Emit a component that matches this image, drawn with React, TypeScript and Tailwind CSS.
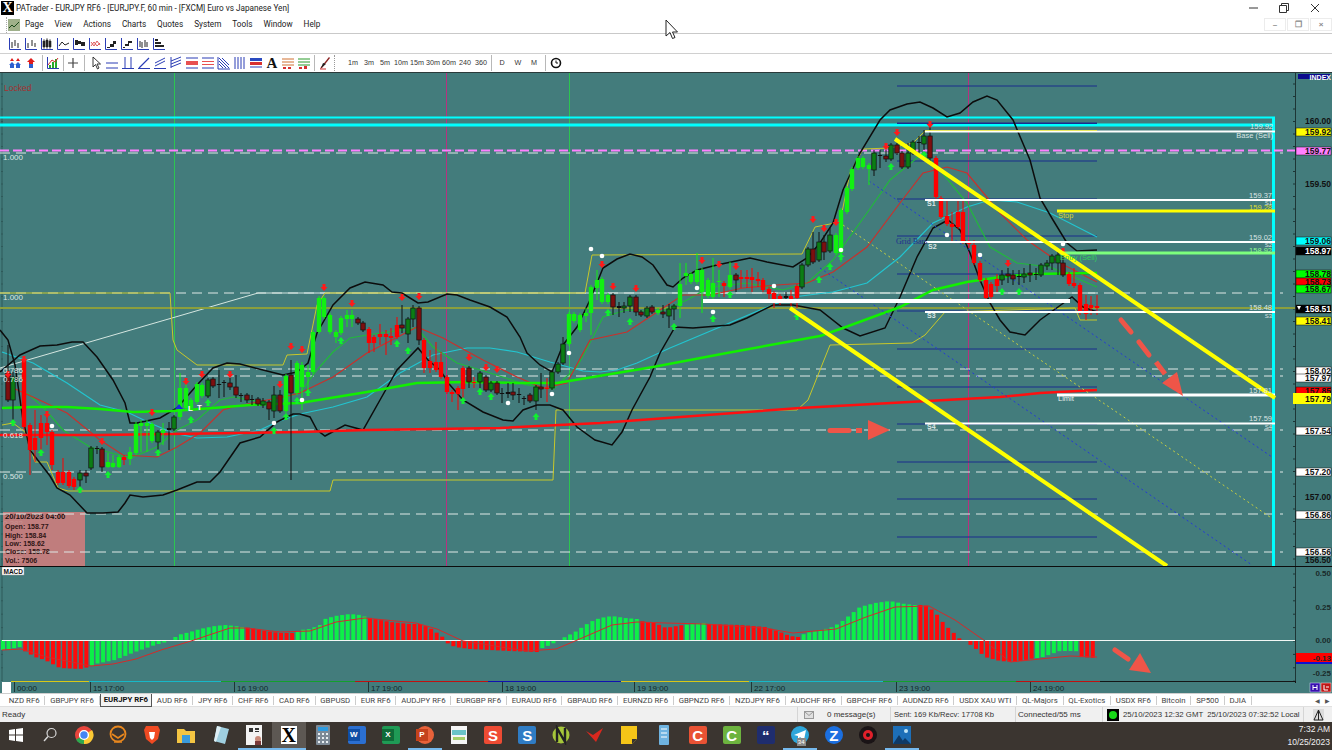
import type { ReactNode } from 'react'

// candles: x, bodyTop, bodyBottom, wickTop, wickBottom, kind
// L lime, D dark green, R red, M maroon, K doji
type Candle = [number, number, number, number, number, string]

const candles: Candle[] = [
  [8,373,400,345,402,'M'],[13,377,400,372,420,'D'],[24,360,427,358,430,'R'],[30,425,450,423,475,'R'],[35,438,450,410,462,'R'],
  [41,423,438,415,450,'R'],[47,423,432,412,445,'R'],[52,432,465,430,470,'R'],[58,472,483,470,485,'R'],[63,472,483,458,485,'R'],
  [69,472,486,470,488,'R'],[74,479,487,477,490,'R'],[80,473,480,470,490,'D'],[86,473,476,470,483,'M'],[91,448,468,446,470,'D'],
  [97,448,449,446,454,'K'],[102,449,467,447,472,'M'],[108,462,467,453,468,'L'],[113,463,467,455,468,'L'],[119,457,467,455,468,'L'],
  [124,457,460,455,465,'R'],[130,452,459,447,465,'L'],[136,424,453,422,455,'L'],[141,423,426,420,452,'L'],[147,423,426,420,452,'L'],
  [152,424,441,422,443,'L'],[158,432,442,430,453,'D'],[163,430,433,423,445,'L'],[169,428,430,422,450,'K'],[174,417,429,415,431,'D'],
  [180,388,417,373,420,'L'],[186,388,408,384,410,'L'],[191,400,408,398,410,'L'],[197,384,402,382,404,'L'],[202,385,396,383,398,'L'],
  [208,380,396,378,398,'D'],[213,379,386,377,388,'M'],[219,384,385,370,398,'K'],[224,382,383,380,397,'K'],[230,383,387,378,390,'M'],
  [236,387,395,375,398,'M'],[241,395,396,393,402,'K'],[247,395,400,393,403,'M'],[252,399,400,395,405,'K'],[258,399,404,397,406,'M'],
  [263,401,405,398,408,'D'],[269,402,409,400,420,'M'],[274,395,411,386,418,'D'],[280,395,411,390,413,'M'],[286,376,411,374,413,'L'],
  [291,375,393,360,480,'M'],[297,363,393,361,395,'L'],[302,365,387,362,410,'L'],[308,372,377,365,395,'L'],[313,332,372,330,374,'L'],
  [319,298,332,296,334,'L'],[324,298,317,296,319,'L'],[330,315,332,313,334,'L'],[336,332,337,330,343,'L'],[341,318,333,316,335,'L'],
  [347,315,319,310,327,'L'],[352,315,319,310,327,'L'],[358,319,323,317,325,'M'],[363,323,330,321,332,'M'],[369,329,343,327,353,'R'],
  [374,337,343,335,352,'R'],[380,334,337,324,345,'R'],[386,334,337,330,355,'R'],[391,336,338,328,345,'R'],[397,325,337,317,339,'R'],
  [402,325,328,305,333,'M'],[408,319,334,317,343,'D'],[413,308,319,305,327,'D'],[419,308,340,306,345,'M'],[424,340,368,338,373,'R'],
  [430,361,368,350,373,'R'],[436,362,370,342,372,'R'],[441,362,377,352,379,'R'],[447,377,392,375,394,'R'],[452,392,394,390,402,'R'],
  [458,388,394,386,410,'R'],[463,368,389,366,403,'R'],[469,368,382,366,388,'M'],[474,382,383,377,388,'R'],[480,373,382,371,388,'D'],
  [486,377,390,375,392,'M'],[491,383,390,381,392,'D'],[497,383,393,381,395,'M'],[502,393,394,388,403,'K'],[508,392,394,383,398,'K'],
  [513,392,395,383,400,'M'],[519,394,395,388,403,'K'],[524,398,399,396,405,'K'],[530,395,401,393,403,'M'],[536,387,401,385,410,'D'],
  [541,387,389,373,398,'M'],[547,388,389,378,402,'R'],[552,372,388,370,390,'D'],[558,364,372,362,374,'D'],[563,344,363,337,365,'D'],
  [569,314,344,312,346,'L'],[574,314,321,312,323,'L'],[580,315,330,313,332,'L'],[586,313,316,308,322,'L'],[591,287,313,285,335,'L'],
  [597,280,288,270,300,'L'],[602,279,302,277,304,'L'],[608,295,302,293,304,'L'],[613,295,307,293,315,'M'],[619,306,308,302,317,'K'],
  [624,306,308,302,313,'D'],[630,297,306,295,312,'D'],[636,297,312,295,316,'M'],[641,312,315,310,317,'M'],[647,308,316,306,318,'D'],
  [652,307,312,305,314,'M'],[658,310,313,308,315,'L'],[663,312,314,305,318,'M'],[669,309,316,304,328,'D'],[674,306,309,304,320,'D'],
  [680,284,306,263,318,'L'],[686,273,276,263,285,'L'],[691,274,282,272,284,'L'],[697,270,282,253,284,'L'],[702,270,292,268,313,'L'],
  [708,280,296,278,298,'L'],[713,283,297,258,299,'L'],[719,281,282,270,297,'L'],[724,283,286,281,297,'R'],[730,275,287,262,289,'L'],
  [736,275,280,273,292,'M'],[741,277,279,270,288,'R'],[747,277,279,270,288,'R'],[752,277,280,268,292,'R'],[758,279,281,272,287,'R'],
  [763,280,290,278,292,'R'],[769,289,294,287,299,'R'],[774,293,303,291,308,'R'],[780,296,302,294,305,'R'],[786,296,298,292,302,'K'],
  [791,296,299,290,306,'R'],[797,286,298,284,308,'R'],[802,265,287,263,289,'D'],[808,249,265,247,267,'D'],[813,249,262,232,264,'M'],
  [819,242,260,232,262,'D'],[824,242,252,235,260,'M'],[830,235,251,228,253,'D'],[836,235,253,233,255,'L'],[841,210,253,208,262,'L'],
  [847,188,212,186,214,'L'],[852,169,189,167,191,'L'],[858,158,168,156,170,'L'],[863,158,167,156,169,'L'],[869,165,169,163,185,'L'],
  [874,153,170,150,176,'D'],[880,155,156,150,168,'K'],[886,156,159,150,162,'M'],[891,145,159,143,161,'D'],[897,145,153,143,155,'M'],
  [902,153,167,151,169,'M'],[908,153,167,143,169,'D'],[913,142,153,140,155,'D'],[919,142,143,136,155,'K'],[924,136,144,130,150,'D'],
  [930,136,158,125,165,'M'],[936,158,197,156,199,'R'],[941,198,217,196,219,'R'],[947,216,224,200,226,'R'],[952,224,227,212,243,'R'],
  [958,212,227,201,229,'R'],[963,212,242,200,244,'R'],[969,242,244,240,248,'R'],[974,245,263,240,265,'R'],[980,263,280,261,282,'R'],
  [986,280,298,278,300,'R'],[991,284,297,282,299,'R'],[997,279,286,274,292,'R'],[1002,275,280,270,285,'D'],[1008,274,276,268,283,'M'],
  [1013,275,279,270,285,'M'],[1019,276,277,270,285,'K'],[1024,274,277,268,283,'D'],[1030,273,275,264,282,'M'],[1036,274,275,268,280,'K'],
  [1041,265,275,263,277,'D'],[1047,263,266,260,270,'D'],[1052,256,263,254,270,'D'],[1058,255,263,252,275,'D'],[1063,263,275,250,277,'M'],
  [1069,274,284,272,286,'R'],[1074,283,286,268,288,'R'],[1080,285,313,283,315,'R'],[1086,304,314,295,320,'R'],[1091,305,308,296,315,'R'],
  [1097,306,308,295,315,'R'],
]

const upperBand = '0,372 20,355 40,346 57,345 72,342 83,342 97,357 113,380 125,403 130,423 137,423 160,418 177,408 197,385 213,368 227,363 240,364 263,370 283,375 297,372 308,363 317,333 333,305 350,288 365,282 383,285 392,292 402,293 418,303 428,302 447,294 457,295 470,300 490,307 507,317 520,337 527,353 540,365 552,372 563,345 577,327 590,300 603,268 617,259 630,254 642,257 653,265 667,285 673,287 683,278 697,270 717,265 750,258 767,262 793,267 807,258 820,243 833,223 843,190 860,153 880,120 890,110 907,104 920,102 933,108 947,117 960,113 973,102 987,96 997,100 1013,120 1030,160 1040,198 1053,220 1067,243 1077,251 1097,250'
const lowerBand = '0,330 8,340 15,365 23,420 30,450 50,476 57,488 70,495 87,513 103,513 118,512 125,503 130,495 143,497 163,495 177,490 197,482 210,482 220,472 240,443 260,437 277,422 293,414 300,414 310,417 317,430 325,436 345,425 363,430 380,400 397,370 418,348 428,360 440,370 450,385 463,400 483,412 503,420 513,421 523,410 537,405 550,405 563,410 577,427 595,440 612,445 622,432 632,410 650,377 660,353 675,327 693,328 730,325 747,318 773,305 793,305 820,310 843,328 860,336 885,328 900,297 917,257 933,228 948,220 960,230 970,253 980,280 990,303 1000,320 1010,332 1025,335 1040,320 1058,307 1072,297 1083,307 1097,312'
const cyanLine = '2,352 33,363 67,383 100,405 127,412 150,423 173,433 197,438 227,437 260,430 277,422 300,414 333,407 367,397 400,373 433,355 467,348 490,348 517,352 550,362 583,371 600,372 617,370 637,363 670,348 720,327 760,310 793,297 833,292 867,283 900,257 933,223 967,207 990,200 1017,202 1050,213 1097,237'
const redLine = '13,388 33,397 67,413 100,440 123,455 157,457 177,447 200,433 223,410 233,407 267,400 283,397 300,393 333,377 367,353 417,327 443,338 483,360 517,377 543,388 567,383 590,340 627,332 660,310 683,295 710,295 743,288 777,285 807,283 833,272 867,247 900,203 923,173 947,167 967,173 1000,213 1027,240 1060,263 1097,282'
const greenLine = '27,393 43,407 63,430 90,447 130,458 157,447 177,430 197,420 220,400 233,397 267,403 300,393 317,370 333,352 350,338 367,335 417,328 433,347 457,363 487,372 527,385 553,389 577,367 593,337 603,317 627,310 660,312 687,300 710,287 747,283 783,290 807,283 833,260 867,213 890,180 923,153 940,170 967,203 990,247 1017,263 1050,267 1097,287'
const thickGreen = '2,408 33,407 67,407 100,409 133,412 173,411 213,408 250,405 300,403 367,392 417,383 467,382 517,383 557,383 653,367 727,353 820,336 843,328 900,307 933,290 967,282 1000,277 1033,274 1097,273'
const thickRed = '0,435 100,435 300,432 367,430 500,428 600,423 800,408 1000,397 1040,393 1097,390'
const yellowUpper = '0,293 170,293 173,340 177,350 197,365 283,365 287,355 307,354 317,305 325,293 585,293 592,255 802,254 815,227 840,222 850,173 863,149 890,148 913,143 925,131'
const yellowLower = '2,425 13,423 25,432 35,462 47,462 58,488 68,491 330,491 333,480 553,480 556,410 797,410 808,400 830,345 912,343 925,335 945,312 1075,308 1080,320 1097,320'

const redMarks = [[24,360],[8,375],[47,415],[102,442],[152,413],[186,382],[202,375],[230,375],[280,385],[291,347],[302,350],[324,288],[352,304],[402,298],[419,297],[469,358],[486,368],[497,370],[602,265],[613,287],[636,289],[702,261],[719,265],[736,267],[813,220],[824,229],[836,223],[886,147],[897,133],[930,125],[1008,264],[1063,252]]
const greenMarks = [[13,423],[41,453],[80,490],[108,475],[158,453],[191,420],[208,403],[274,431],[286,417],[297,401],[308,393],[341,341],[397,344],[408,351],[463,401],[480,392],[491,397],[536,417],[608,313],[630,322],[674,327],[713,319],[730,295],[797,317],[819,280],[830,267],[841,257],[891,167],[924,155],[1002,292],[1019,292]]
const whiteDots = [[52,426],[274,423],[302,400],[508,403],[552,394],[569,353],[591,249],[602,256],[697,288],[713,312],[774,286],[841,250],[947,235],[980,255],[1063,244]]

const gridLines = [86,123,161,199,236,274,311,349,387,424,462,499,537]
const dashed = [153,293,369,376,430,472,514,552]

const priceTags: [number, string, string, string][] = [
  [132,'159.92','#ffff00','#111'],[151,'159.77','#ff80ff','#111'],[241,'159.06','#00ffff','#111'],[251,'158.97','#000','#fff'],
  [274,'158.78','#00ff00','#111'],[282,'158.73','#ff0000','#111'],[289,'158.67','#00ff00','#111'],[309,'158.51','#000','#fff'],
  [321,'158.41','#ffff00','#111'],[371,'158.02','#fff','#111'],[378,'157.97','#fff','#111'],[391,'157.85','#ff0000','#111'],
  [431,'157.54','#fff','#111'],[472,'157.20','#fff','#111'],[515,'156.86','#fff','#111'],[552,'156.56','#fff','#111'],
]

// macd histogram anchors, value in px above the zero line
const macdAnchors = [[2,-10],[10,-9],[20,-7],[23,-10],[35,-17],[45,-20],[60,-28],[80,-29],[89,-27],[95,-24],[115,-20],[135,-12],[155,-5],[170,-1],[178,5],[190,8],[200,11],[215,14],[225,15],[235,14],[242,13],[250,12],[265,9],[280,7],[293,7],[300,10],[310,11],[320,15],[325,21],[335,24],[350,26],[360,25],[366,23],[375,21],[390,18],[410,16],[420,16],[430,12],[440,5],[444,2],[447,-3],[455,-7],[470,-9],[490,-10],[510,-11],[537,-12],[540,-9],[550,-5],[558,-1],[565,3],[575,8],[590,18],[600,22],[612,24],[625,22],[637,21],[640,19],[655,17],[666,12],[683,15],[704,17],[706,16],[740,15],[765,13],[780,8],[790,4],[798,3],[802,5],[806,7],[830,12],[840,17],[850,25],[860,33],[875,37],[890,39],[905,36],[914,35],[925,35],[935,28],[945,15],[955,6],[960,1],[965,-1],[975,-8],[985,-17],[1000,-21],[1015,-22],[1035,-18],[1040,-18],[1060,-11],[1076,-11],[1079,-17],[1097,-18]]
const macdRed = [[22,91],[244,294],[366,538],[639,682],[705,803],[916,1037],[1077,1100]]
const macdSignal = '2,80 21,79 47,87 91,96 113,94 136,89 161,80 191,71 230,58 246,58 280,62 310,61 336,52 365,48 416,53 437,59 463,71 527,81 556,79 582,68 612,55 637,52 666,53 704,54 764,58 793,63 836,59 866,47 895,37 929,36 955,50 985,71 1010,92 1040,89 1070,86 1097,87'

function macdValue(x: number) {
  for (let i = 1; i < macdAnchors.length; i++) {
    const [x0, v0] = macdAnchors[i - 1]
    const [x1, v1] = macdAnchors[i]
    if (x <= x1) return v0 + ((v1 - v0) * (x - x0)) / (x1 - x0)
  }
  return 0
}

const macdBars = Array.from({ length: 198 }, (_, i) => {
  const x = 3 + i * 5.56
  return { x, v: macdValue(x), red: macdRed.some(([a, b]) => x >= a && x <= b) }
})

function Candles() {
  return (
    <g>
      {candles.map(([x, top, bot, wt, wb, kind]) => {
        const wick = kind === 'L' ? '#11f011' : kind === 'R' ? '#ff0000' : '#101010'
        const fill = kind === 'L' ? '#11f011' : kind === 'R' ? '#ff0000' : kind === 'D' ? '#0b7d14' : kind === 'M' ? '#7d0f0f' : '#101010'
        const outline = kind === 'D' || kind === 'M' ? '#101010' : 'none'
        return (
          <g key={x}>
            <line x1={x} x2={x} y1={wt} y2={wb} stroke={wick} strokeWidth="1" />
            <rect x={x - 2.2} y={top} width="4.4" height={Math.max(bot - top, 1)} fill={fill} stroke={outline} strokeWidth="0.7" />
          </g>
        )
      })}
    </g>
  )
}

function PriceChart() {
  return (
    <svg width="1332" height="495" viewBox="0 72 1332 495" className="block font-['Liberation_Sans',sans-serif]">
      <rect x="0" y="72" width="1332" height="495" fill="#437c7c" />
      <line x1="0" x2="1332" y1="72.5" y2="72.5" stroke="#2a3a3a" />
      <line x1="2" x2="2" y1="73" y2="566" stroke="#2f5a5a" />
      <line x1="1295.5" x2="1295.5" y1="73" y2="566" stroke="#1d3535" />
      {Array.from({ length: 40 }, (_, i) => (
        <g key={i}>
          <line x1="1293" x2="1296" y1={84 + i * 12.5} y2={84 + i * 12.5} stroke="#1d3535" />
          <line x1="1" x2="3" y1={84 + i * 12.5} y2={84 + i * 12.5} stroke="#2f5a5a" />
        </g>
      ))}

      {/* tooltip sits under the fib lines */}
      <rect x="3" y="512" width="82" height="54" fill="#c07d7d" />
      <g fontSize="8" fill="#c89090">
        <text x="3" y="526">0.382</text>
        <text x="3" y="561">0.618</text>
      </g>
      <text x="5" y="519" fontSize="7.7" fontWeight="700" fill="#201010">20/10/2023 04:00</text>
      <g fontSize="7" fontWeight="700" fill="#301515">
        <text x="5" y="529">Open: 158.77</text>
        <text x="5" y="538">High: 158.84</text>
        <text x="5" y="546">Low: 158.62</text>
        <text x="5" y="554">Close: 158.78</text>
        <text x="5" y="563">Vol.: 7506</text>
      </g>

      <line x1="174.5" x2="174.5" y1="73" y2="566" stroke="#2cc650" />
      <line x1="569.5" x2="569.5" y1="73" y2="566" stroke="#2cc650" />
      <line x1="446.5" x2="446.5" y1="73" y2="566" stroke="#b83080" />
      <line x1="968.5" x2="968.5" y1="73" y2="566" stroke="#b83080" />

      {gridLines.map((y) => (
        <line key={y} x1="897" x2="1097" y1={y} y2={y} stroke="#1a2c8c" strokeWidth="1" />
      ))}
      {dashed.map((y) => (
        <line key={y} x1="0" x2="1283" y1={y} y2={y} stroke="#dfe8e6" strokeWidth="1" strokeDasharray="10 6" />
      ))}

      <polyline points="0,368 258,293 1095,293" fill="none" stroke="#d5e6e0" strokeWidth="1" />
      <line x1="0" x2="1295" y1="308" y2="308" stroke="#8b9f3d" strokeWidth="2" />

      <line x1="0" x2="1275" y1="117.5" y2="117.5" stroke="#00ffff" strokeWidth="2" />
      <line x1="0" x2="1275" y1="125" y2="125" stroke="#00ffff" strokeWidth="3" />
      <line x1="1273.5" x2="1273.5" y1="117" y2="566" stroke="#00ffff" strokeWidth="3" />
      <line x1="0" x2="1295" y1="150.5" y2="150.5" stroke="#ff80ff" strokeWidth="2" strokeDasharray="9 4" />
      <line x1="897" x2="1097" y1="123.5" y2="123.5" stroke="#1a2c8c" />

      <polyline points={yellowUpper} fill="none" stroke="#c8c82a" strokeWidth="1" />
      <polyline points={yellowLower} fill="none" stroke="#c8c82a" strokeWidth="1" />
      <polyline points={cyanLine} fill="none" stroke="#22c5d0" strokeWidth="1.2" />
      <polyline points={greenLine} fill="none" stroke="#22b83c" strokeWidth="1.2" />
      <polyline points={redLine} fill="none" stroke="#c9302c" strokeWidth="1.2" />
      <polyline points={upperBand} fill="none" stroke="#0c0c0c" strokeWidth="1.5" />
      <polyline points={lowerBand} fill="none" stroke="#0c0c0c" strokeWidth="1.5" />
      <polyline points={thickGreen} fill="none" stroke="#12f000" strokeWidth="2.5" />
      <polyline points={thickRed} fill="none" stroke="#ff1010" strokeWidth="2.5" />

      <line x1="869" y1="181" x2="1272" y2="457" stroke="#2438d8" strokeDasharray="2 3" />
      <line x1="820" y1="268" x2="1252" y2="565" stroke="#2438d8" strokeDasharray="2 3" />
      <line x1="843" y1="225" x2="1270" y2="517" stroke="#c8d040" strokeDasharray="2 3" />

      <Candles />

      {redMarks.map(([x, y]) => (
        <path key={`r${x}`} d={`M${x - 1.5} ${y - 4}h3v3h2l-3.5 4l-3.5 -4h2z`} fill="#ff1a1a" />
      ))}
      {greenMarks.map(([x, y]) => (
        <path key={`g${x}`} d={`M${x} ${y - 4}l3.5 4h-2v3h-3v-3h-2z`} fill="#10f030" />
      ))}
      {whiteDots.map(([x, y]) => (
        <circle key={`w${x}`} cx={x} cy={y} r="2.3" fill="#ffffff" />
      ))}

      {/* levels */}
      <line x1="925" x2="1275" y1="131.5" y2="131.5" stroke="#ffffff" strokeWidth="2" />
      <line x1="925" x2="1097" y1="130.5" y2="130.5" stroke="#e8e860" strokeWidth="1" />
      <line x1="925" x2="1275" y1="200" y2="200" stroke="#ffffff" strokeWidth="2" />
      <line x1="1057" x2="1275" y1="211" y2="211" stroke="#ffff00" strokeWidth="3" />
      <line x1="925" x2="1275" y1="242" y2="242" stroke="#ffffff" strokeWidth="2" />
      <line x1="1060" x2="1275" y1="253" y2="253" stroke="#7dff7d" strokeWidth="3" />
      <line x1="703" x2="1070" y1="301" y2="301" stroke="#ffffff" strokeWidth="4" />
      <line x1="925" x2="1275" y1="312" y2="312" stroke="#ffffff" strokeWidth="2" />
      <line x1="1057" x2="1275" y1="395" y2="395" stroke="#ffffff" strokeWidth="3" />
      <line x1="925" x2="1275" y1="423.5" y2="423.5" stroke="#ffffff" strokeWidth="2" />

      <line x1="895" y1="139" x2="1275" y2="398" stroke="#ffff00" strokeWidth="4" />
      <line x1="790" y1="308" x2="1167" y2="566" stroke="#ffff00" strokeWidth="4" />

      {/* hand drawn arrows */}
      <g fill="#ef5548" stroke="#ef5548" strokeWidth="5" strokeLinecap="round">
        <line x1="1121" y1="320" x2="1131" y2="332" />
        <line x1="1139" y1="342" x2="1149" y2="355" />
        <line x1="1156" y1="362" x2="1165" y2="374" strokeLinecap="butt" />
        <line x1="830" y1="430.5" x2="849" y2="430.5" />
        <line x1="856" y1="430.5" x2="862" y2="430.5" strokeLinecap="butt" />
      </g>
      <path d="M1177 372L1162 383L1183 396Z" fill="#ef5548" />
      <path d="M868 420L890 430L868 440Z" fill="#ef5548" />

      {/* texts on the chart */}
      <text x="4" y="91" fontSize="8.5" fill="#a53030">Locked</text>
      <g fontSize="8" fill="#dbe6e4">
        <text x="3" y="160">1.000</text>
        <text x="3" y="300">1.000</text>
        <text x="3" y="373">0.786</text>
        <text x="3" y="382">0.786</text>
        <text x="3" y="438">0.618</text>
        <text x="3" y="479">0.500</text>
      </g>
      <g fontSize="8" fontWeight="700" fill="#ffffff">
        <text x="188" y="411">L</text>
        <text x="197" y="410">T</text>
      </g>
      <path d="M175 409l4 -5l4 5z" fill="#1a2cd8" />
      <g fontSize="7.5" fill="#dbe6e4" textAnchor="end">
        <text x="1273" y="129">159.92</text>
        <text x="1273" y="138">Base (Sell)</text>
        <text x="1272" y="198">159.37</text>
        <text x="1272" y="240">159.02</text>
        <text x="1272" y="310">158.48</text>
        <text x="1272" y="393">157.81</text>
        <text x="1272" y="421">157.59</text>
      </g>
      <g fontSize="6" fill="#dbe6e4" textAnchor="end">
        <text x="1272" y="205">S1</text>
        <text x="1272" y="247">S2</text>
        <text x="1272" y="318">S3</text>
        <text x="1272" y="429">S4</text>
      </g>
      <text x="1272" y="209.5" fontSize="7.5" fill="#dcdc30" textAnchor="end">159.28</text>
      <text x="1272" y="252.5" fontSize="7.5" fill="#90ff90" textAnchor="end">158.92</text>
      <text x="1058" y="218" fontSize="7.5" fill="#d8d830">Stop</text>
      <text x="1058" y="401" fontSize="7.5" fill="#e8efee">Limit</text>
      <text x="1060" y="260" fontSize="7.5" fill="#33d45a">Entry (Sell)</text>
      <text x="896" y="244" fontSize="8" fill="#1c2f8f" fontFamily="Liberation Serif, serif">Grid Bars</text>
      <g fontSize="7" fontWeight="700" fill="#dbe6e4">
        <text x="927" y="206">S1</text>
        <text x="928" y="249">S2</text>
        <text x="927" y="318">S3</text>
        <text x="927" y="429">S4</text>
      </g>

      {/* price axis */}
      <rect x="1298" y="74" width="32" height="5" fill="#0b0b8c" />
      <text x="1331" y="79.5" fontSize="7" fontWeight="700" fill="#ffffff" textAnchor="end">INDEX</text>
      <g fontSize="8.5" fontWeight="700" fill="#111" textAnchor="end">
        <text x="1331" y="124">160.00</text>
        <text x="1331" y="187">159.50</text>
        <text x="1331" y="500">157.00</text>
        <text x="1331" y="563">156.50</text>
      </g>
      {priceTags.map(([y, label, bg, fg]) => (
        <g key={label}>
          <rect x="1296" y={y - 4} width="35" height="8" fill={bg} stroke="#111" strokeWidth="0.5" />
          <text x="1331" y={y + 3} fontSize="8.5" fontWeight="700" fill={fg} textAnchor="end">{label}</text>
        </g>
      ))}
      <path d="M1297 306h4l-2 4z" fill="#ffffff" />
      <rect x="1293" y="393" width="38" height="11" fill="#ffff00" />
      <text x="1331" y="402" fontSize="8.5" fontWeight="700" fill="#111" textAnchor="end">157.79</text>

      <line x1="0" x2="1332" y1="566.5" y2="566.5" stroke="#0c0c0c" />
    </svg>
  )
}

function MacdPanel() {
  return (
    <svg width="1332" height="114" viewBox="0 567 1332 114" className="block font-['Liberation_Sans',sans-serif]">
      <rect x="0" y="567" width="1332" height="114" fill="#437c7c" />
      <line x1="2" x2="2" y1="567" y2="681" stroke="#2f5a5a" />
      <line x1="1295.5" x2="1295.5" y1="567" y2="681" stroke="#1d3535" />
      {Array.from({ length: 9 }, (_, i) => (
        <g key={i}>
          <line x1="1293" x2="1296" y1={574 + i * 13.4} y2={574 + i * 13.4} stroke="#1d3535" />
          <line x1="1" x2="3" y1={574 + i * 13.4} y2={574 + i * 13.4} stroke="#2f5a5a" />
        </g>
      ))}
      {macdBars.map((bar) => (
        <rect
          key={bar.x}
          x={bar.x - 2}
          y={bar.v > 0 ? 640 - bar.v : 640}
          width="4"
          height={Math.abs(bar.v)}
          fill={bar.red ? '#ff0a0a' : '#0cf048'}
        />
      ))}
      <line x1="2" x2="1295" y1="640.5" y2="640.5" stroke="#f2f7f5" strokeWidth="1" />
      <g transform="translate(0 570)">
        <polyline points={macdSignal} fill="none" stroke="#d42a2a" strokeWidth="1" />
      </g>
      <rect x="2" y="567" width="22" height="8" fill="#ffffff" stroke="#9a9a9a" strokeWidth="0.5" />
      <text x="3.5" y="573.5" fontSize="6.5" fontWeight="700" fill="#111">MACD</text>

      <g fill="#ef5548" stroke="#ef5548" strokeWidth="5" strokeLinecap="round">
        <line x1="1115" y1="650" x2="1128" y2="659" />
      </g>
      <path d="M1140 653L1129 670L1151 673Z" fill="#ef5548" />

      <g fontSize="8" fontWeight="700" fill="#1a2a2a" textAnchor="end">
        <text x="1331" y="576">0.50</text>
        <text x="1331" y="610">0.25</text>
        <text x="1331" y="643">0.00</text>
        <text x="1331" y="676">-0.25</text>
      </g>
      <rect x="1296" y="653" width="36" height="9" fill="#ff0000" />
      <rect x="1296" y="662" width="36" height="2" fill="#1010d0" />
      <text x="1331" y="660.5" fontSize="8" fontWeight="700" fill="#222" textAnchor="end">-0.13</text>
    </svg>
  )
}

const timeSegments: [number, number, string][] = [
  [11,89,'#d8c818'],[89,221,'#17b8c8'],[221,355,'#12a02c'],[355,488,'#c01010'],[488,621,'#1010b0'],
  [621,749,'#d8c818'],[749,883,'#17b8c8'],[883,1016,'#12a02c'],[1016,1100,'#c01010'],
]
const timeLabels: [number, string][] = [
  [15,'00:00'],[91,'15 17:00'],[235,'16 19:00'],[369,'17 19:00'],[503,'18 19:00'],[635,'19 19:00'],[752,'22 17:00'],[897,'23 19:00'],[1031,'24 19:00'],
]

function TimeAxis() {
  return (
    <svg width="1332" height="12" viewBox="0 681 1332 12" className="block font-['Liberation_Sans',sans-serif]">
      <rect x="0" y="681" width="1332" height="12" fill="#437c7c" />
      <line x1="11" x2="1295" y1="681" y2="681" stroke="#151515" strokeWidth="2" />
      <line x1="1295.5" x2="1295.5" y1="681" y2="683" stroke="#151515" />
      {timeSegments.map(([a, b, c]) => (
        <line key={a} x1={a} x2={b} y1="681" y2="681" stroke={c} strokeWidth="2" />
      ))}
      <rect x="2" y="682" width="9" height="11" fill="#ffffff" />
      {timeLabels.map(([x, label]) => (
        <g key={x}>
          <line x1={x - 0.5} x2={x - 0.5} y1="682" y2="692" stroke="#1f3535" />
          <text x={x + 2} y="691" fontSize="8" fill="#12282a">{label}</text>
        </g>
      ))}
      <rect x="1310" y="683" width="10" height="9" fill="#3a10b0" stroke="#dcdcff" strokeWidth="0.5" />
      <path d="M1313 685v5M1317 685v5M1313 687.5h4" stroke="#ffffff" fill="none" />
      <rect x="1321" y="683" width="10" height="9" fill="#c01818" stroke="#ffdcdc" strokeWidth="0.5" />
      <path d="M1324 685v5h4M1326 687h3" stroke="#ffffff" fill="none" />
    </svg>
  )
}

function Ico({ children }: { children: ReactNode }) {
  return (
    <div className="flex h-4 w-4 shrink-0 items-center justify-center">
      <svg width="14" height="14" viewBox="0 0 14 14">{children}</svg>
    </div>
  )
}

function Sep({ w = 'w-[6px]' }: { w?: string }) {
  return (
    <div className={`flex h-4 shrink-0 justify-center ${w}`}>
      <div className="h-full w-px bg-[#b8b8b8]" />
    </div>
  )
}

const BLUE = '#2a3db5'
const Axes = () => <path d="M1.5 1v11.5H13" fill="none" stroke={BLUE} strokeWidth="1" />

function Sticks({ xs }: { xs: [number, number, number][] }) {
  return (
    <>
      {xs.map(([x, a, b]) => (
        <line key={x} x1={x} x2={x} y1={a} y2={b} stroke="#222" strokeWidth="1" />
      ))}
    </>
  )
}

const chartIcons = [
  <Sticks key="1" xs={[[4,5,11],[7,3,9],[10,6,11]]} />,
  <Sticks key="2" xs={[[4,6,11],[8,3,9],[11,6,10]]} />,
  <path key="3" d="M3 4h2v6H3zM6 3h2v7H6zM9 4h2v6H9zM4 2v10M7 1v11M10 2v10" fill="#222" stroke="#222" strokeWidth="0.6" />,
  <path key="4" d="M3 9l3 -4l3 3l4 -2" fill="none" stroke="#222" />,
  <path key="5" d="M3 3h3v5H3zM6 4h3v3H6zM9 5h4v4H9z" fill="#222" />,
  <path key="6" d="M3 5l3 4l3 -5l3 4M3 9l3 -4l3 4l3 -3" fill="none" stroke="#e05a5a" />,
  <path key="7" d="M3 10h3V7h3V4h3v3h-2v3H6v1H3z" fill="#222" />,
  <path key="8" d="M3 10h2V7h3V4h4v2h-3v3H5v2H3z" fill="#222" />,
  <Sticks key="9" xs={[[4,4,10],[6,5,11],[9,3,10],[11,5,10]]} />,
  <path key="10" d="M3 2h3v2H3zM3 5h6v2H3zM3 8h9v2H3z" fill="#222" />,
]

const drawIcons = [
  <path key="a" d="M1 7h12M1 12h12" stroke={BLUE} fill="none" />,
  <path key="b" d="M4 1v11M10 1v11M1 12.5h12" stroke={BLUE} fill="none" />,
  <path key="c" d="M2 12L12 2M1 12.5h12" stroke={BLUE} strokeWidth="1.2" fill="none" />,
  <path key="d" d="M2 10L12 5M2 7L12 2M1 12.5h12" stroke={BLUE} fill="none" />,
  <path key="e" d="M2 11L12 7M2 8L12 4M2 5L12 1M2 1v11" stroke={BLUE} fill="none" />,
  <><path key="f" d="M1 2h12M1 12h12" stroke={BLUE} fill="none" /><path d="M1 5h12v4H1z" fill="#e85050" /></>,
  <><path key="g" d="M1 2h12M1 12h12" stroke={BLUE} fill="none" /><path d="M1 5h12v1H1zM1 8h12v1H1z" fill="#e85050" /></>,
  <path key="h" d="M2 2l10 10M2 5l7 7M5 2l7 7M2 8l4 4M1 1v12h12" stroke={BLUE} fill="none" />,
  <path key="i" d="M2 1v12M5 1v12M8 1v12M11 1v12" stroke={BLUE} fill="none" />,
]

function TitleBar() {
  return (
    <div className="flex h-4 items-center">
      <div className="ml-px flex h-[14px] w-[13px] items-center justify-center bg-black font-['Liberation_Serif',serif] text-[14px] font-bold leading-none text-white">X</div>
      <span className="ml-[2px] font-['Roboto',sans-serif] text-[8.2px] text-[#222]">PATrader - EURJPY RF6 - [EURJPY.F, 60 min - [FXCM] Euro vs Japanese Yen]</span>
      <div className="ml-auto flex items-center">
        <svg width="10" height="10" viewBox="0 0 10 10" className="mr-5"><path d="M0 5h9" stroke="#333" /></svg>
        <svg width="10" height="10" viewBox="0 0 10 10" className="mr-[21px]"><path d="M0.5 2.5h7v7h-7zM2.5 2V0.5h7v7H8" fill="none" stroke="#333" /></svg>
        <svg width="10" height="10" viewBox="0 0 10 10" className="mr-3"><path d="M1 1l8 8M9 1l-8 8" stroke="#333" /></svg>
      </div>
    </div>
  )
}

function MenuBar() {
  const items = ['Page', 'View', 'Actions', 'Charts', 'Quotes', 'System', 'Tools', 'Window', 'Help']
  return (
    <div className="flex h-[18px] items-center border-b border-[#c9c9c9]">
      <div className="ml-[6px] h-[16px] w-px border-l border-dotted border-[#aaa]" />
      <svg width="12" height="12" viewBox="0 0 12 12" className="ml-px">
        <rect width="12" height="12" fill="#9fb08a" />
        <path d="M1 9l3 -3l2 2l5 -5" stroke="#1a4a1a" fill="none" />
      </svg>
      <div className="ml-[5px] flex gap-[11px] font-['Roboto',sans-serif] text-[8.2px] text-[#222]">
        {items.map((m) => (
          <span key={m}>{m}</span>
        ))}
      </div>
      <div className="ml-auto mr-0 flex h-[13px] gap-px">
        {['–', '❐', '×'].map((g) => (
          <div key={g} className="flex h-[13px] w-[22px] items-center justify-center border border-[#ececec] text-[8px] font-bold text-[#8a8a8a]">{g}</div>
        ))}
      </div>
    </div>
  )
}

function ChartToolbar() {
  return (
    <div className="flex h-5 items-center border-b border-[#d0d0d0] pl-[7px]">
      {chartIcons.map((icon, i) => (
        <Ico key={i}>
          <Axes />
          {icon}
        </Ico>
      ))}
    </div>
  )
}

function DrawToolbar() {
  const periods = ['1m', '3m', '5m', '10m', '15m', '30m', '60m', '240', '360']
  return (
    <div className="flex h-[18px] items-center pl-[7px] text-[7.2px] text-[#333]">
      <Ico><path d="M2 9h4v3H2zM8 9h4v3H8z" fill="#2c5fd0" /><path d="M4 6l3 3H1zM10 6l3 3H7z" fill="#2c5fd0" /><path d="M2 5h4L4 2zM8 5h4l-2 -3z" fill="#e01c1c" /></Ico>
      <Ico><path d="M5 12h4V8H5z" fill="#2c5fd0" /><path d="M7 2l4 4H9v2H5V6H3z" fill="#e01c1c" /></Ico>
      <Sep />
      <Ico><Axes /><path d="M3 12V9h2v3zM6 12V6h2v6zM9 12V3h2v9z" fill="#2aa82a" /><path d="M2 9l4 -5l3 2l3 -4" stroke="#d03030" fill="none" /></Ico>
      <Sep w="w-[4px]" />
      <Ico><path d="M7 2v10M2 7h10" stroke="#444" strokeWidth="1.2" /></Ico>
      <Sep w="w-[7px]" />
      <Ico><path d="M4 1v10l2.5 -2.5L8.5 13l1.5 -1L8 8h3.5z" fill="#fff" stroke="#222" strokeWidth="0.9" /></Ico>
      {drawIcons.map((icon, i) => (
        <Ico key={i}>{icon}</Ico>
      ))}
      <Ico><path d="M1 2h12v3H1z" fill="#2a4ac0" /><path d="M1 6h12v3H1z" fill="#d83030" /><path d="M1 11h12" stroke={BLUE} /></Ico>
      <div className="flex h-4 w-4 shrink-0 items-center justify-center font-['Liberation_Serif',serif] text-[15px] font-bold leading-none text-[#111]">A</div>
      <Ico><path d="M1 3h12M1 6h12M1 9h12" stroke="#d07030" /><path d="M2 11h3v2H2zM7 11h3v2H7z" fill="#d83030" /></Ico>
      <Ico><path d="M1 3h12M1 6h12M1 9h12" stroke="#2a9a2a" /><path d="M2 11h3v2H2zM7 10h3v3H7z" fill="#d83030" /></Ico>
      <Sep w="w-[5px]" />
      <Ico><path d="M2 13l2 -1l8 -10l-1 -1l-8 10z" fill="#8a2020" /><path d="M3 12l2 -5l3 1z" fill="#222" /><path d="M2 13h6" stroke="#d03030" /></Ico>
      <div className="flex h-4 w-[12px] shrink-0 justify-center pr-[3px]"><div className="mr-[6px] h-full w-px border-l border-dotted border-[#999]" /></div>
      {periods.map((p) => (
        <div key={p} className="flex h-4 w-4 shrink-0 items-center justify-center">{p}</div>
      ))}
      <Sep w="w-[5px]" />
      {['D', 'W', 'M'].map((p) => (
        <div key={p} className="flex h-4 w-4 shrink-0 items-center justify-center">{p}</div>
      ))}
      <Sep />
      <Ico><circle cx="7" cy="7" r="4.5" fill="#fff" stroke="#111" strokeWidth="1.6" /><path d="M7 4.5V7h2" stroke="#111" fill="none" /></Ico>
    </div>
  )
}

const tabs = ['NZD RF6','GBPJPY RF6','EURJPY RF6','AUD RF6','JPY RF6','CHF RF6','CAD RF6','GBPUSD','EUR RF6','AUDJPY RF6','EURGBP RF6','EURAUD RF6','GBPAUD RF6','EURNZD RF6','GBPNZD RF6','NZDJPY RF6','AUDCHF RF6','GBPCHF RF6','AUDNZD RF6','USDX XAU WTI','QL-Majors','QL-Exotics','USDX RF6','Bitcoin','SP500','DJIA']

function TabStrip() {
  return (
    <div className="flex h-[13px] items-center border-t border-[#cfcfcf] bg-white pl-[4px] font-['Roboto',sans-serif] text-[7.8px] text-[#444]">
      {tabs.map((t) =>
        t === 'EURJPY RF6' ? (
          <span key={t} className="flex h-[13px] items-center border border-t-0 border-[#555] bg-[#f3f3f3] px-[3px] font-bold text-[#111]">{t}</span>
        ) : (
          <span key={t} className="border-r border-[#ccc] px-[4.8px] leading-[9px]">{t}</span>
        ),
      )}
      <span className="ml-auto mr-[2px] flex gap-[5px] text-[6px] text-[#555]">
        <span>◀</span>
        <span>▶</span>
      </span>
    </div>
  )
}

function StatusBar() {
  return (
    <div className="flex h-4 items-center border-t border-[#e0e0e0] bg-[#f0f0f0] text-[8px] text-[#333]">
      <span className="w-[797px] shrink-0 pl-[2px]">Ready</span>
      <div className="flex h-full w-[93px] shrink-0 items-center border-l border-[#d5d5d5] pl-[4px]">
        <svg width="10" height="8" viewBox="0 0 10 8" className="ml-[2px]"><rect x="0.5" y="0.5" width="9" height="7" fill="#e0e0e0" stroke="#999" /><path d="M0.5 0.5l4.5 4l4.5 -4" fill="none" stroke="#999" /></svg>
        <span className="ml-[13px]">0 message(s)</span>
      </div>
      <div className="flex h-full w-[125px] shrink-0 items-center border-l border-[#d5d5d5] pl-[3px] text-[7.6px]">Sent: 169 Kb/Recv: 17708 Kb</div>
      <div className="flex h-full w-[87px] shrink-0 items-center border-l border-[#d5d5d5] pl-[2px]">Connected/55 ms</div>
      <div className="flex h-full w-[201px] shrink-0 items-center border-l border-[#d5d5d5] pl-[4px] text-[7.8px]">
        <span className="flex h-3 w-3 shrink-0 items-center justify-center bg-black"><span className="h-2 w-2 rounded-full bg-[#18d818]" /></span>
        <span className="ml-[4px] shrink-0">25/10/2023 12:32 GMT</span>
        <span className="ml-[4px] shrink-0">25/10/2023 07:32:52 Local</span>
      </div>
      <div className="flex h-full flex-1 items-center justify-center border-l border-[#d5d5d5]">
        <svg width="11" height="12" viewBox="0 0 11 12"><rect width="11" height="12" fill="#dcdcdc" /><path d="M5.5 1L10 11H1zM5.5 1v10" fill="none" stroke="#222" /></svg>
      </div>
    </div>
  )
}

function Letter({ bg, fg, ch, round }: { bg: string; fg: string; ch: string; round?: boolean }) {
  return (
    <span
      className={`flex h-[18px] w-[18px] items-center justify-center text-[15px] font-bold leading-none ${round ? 'rounded-full' : 'rounded-[2px]'}`}
      style={{ background: bg, color: fg }}
    >
      {ch}
    </span>
  )
}

const taskIcons: { node: ReactNode; open?: boolean; active?: boolean }[] = [
  { node: <svg width="14" height="14" viewBox="0 0 14 14"><path d="M0 2l6 -1v5.5H0zM7 1l7 -1v6.5H7zM0 7.5h6V13l-6 -1zM7 7.5h7V14l-7 -1z" fill="#fff" /></svg> },
  { node: <svg width="16" height="16" viewBox="0 0 16 16"><circle cx="9.5" cy="6" r="4.5" fill="none" stroke="#d8d8d8" strokeWidth="1.2" /><path d="M6 9.5L2 14" stroke="#d8d8d8" strokeWidth="1.4" /></svg> },
  { node: <svg width="20" height="20" viewBox="0 0 20 20"><circle cx="10" cy="10" r="9" fill="#e8453c" /><path d="M10 10L2 14.5A9 9 0 0 0 10 19z" fill="#2da94f" /><path d="M10 10L10 19A9 9 0 0 0 18 5z" fill="#fcc934" /><circle cx="10" cy="10" r="4.4" fill="#4285f4" stroke="#fff" strokeWidth="1.4" /></svg> },
  { node: <svg width="20" height="20" viewBox="0 0 20 20"><circle cx="10" cy="9" r="7.5" fill="none" stroke="#e8871e" strokeWidth="1.8" /><path d="M4 9l6 4l6 -4M6 17h8" fill="none" stroke="#e8871e" strokeWidth="1.6" /></svg> },
  { node: <svg width="18" height="20" viewBox="0 0 18 20"><path d="M3 1h12l2 4l-2 9l-6 5l-6 -5l-2 -9z" fill="#f04a22" /><path d="M6 7h6l-1 6l-2 2l-2 -2z" fill="#fff" /></svg> },
  { node: <svg width="20" height="18" viewBox="0 0 20 18"><path d="M1 3h7l2 2h9v12H1z" fill="#f4c542" /><rect x="6" y="9" width="8" height="8" fill="#3a9bdc" /></svg> },
  { node: <svg width="18" height="20" viewBox="0 0 18 20"><path d="M5 1l12 3l-4 15l-11 -3z" fill="#9fcfe0" /><path d="M5 1l4 1l-5 15l-2 -1z" fill="#dfeff5" /></svg> },
  { open: true, node: <svg width="18" height="20" viewBox="0 0 18 20"><rect width="16" height="20" fill="#f3f3f3" /><path d="M3 3h4v4H3zM9 3h4v2H9zM9 6h4v1H9z" fill="#333" /><circle cx="12" cy="14" r="3" fill="#c98a7a" /><rect x="9" y="16" width="6" height="4" fill="#7a3a3a" /></svg> },
  { open: true, active: true, node: <span className="flex h-[18px] w-[16px] items-center justify-center bg-white font-['Liberation_Serif',serif] text-[20px] font-bold leading-none text-black">X</span> },
  { node: <svg width="14" height="20" viewBox="0 0 14 20"><rect width="14" height="20" rx="1" fill="#7d8a96" /><rect x="2" y="2" width="10" height="4" fill="#2d9be0" /><path d="M2 8h2v2H2zM6 8h2v2H6zM10 8h2v2h-2zM2 12h2v2H2zM6 12h2v2H6zM10 12h2v2h-2zM2 16h2v2H2zM6 16h2v2H6zM10 16h2v2h-2z" fill="#e8eef2" /></svg> },
  { node: <span className="relative flex h-[18px] w-[18px] justify-end rounded-[2px] bg-[#2b6fd1]"><span className="absolute left-0 top-[3px] flex h-3 w-3 items-center justify-center bg-[#0f4ea5] text-[8px] font-bold text-white">W</span></span> },
  { node: <span className="relative flex h-[18px] w-[18px] justify-end rounded-[2px] bg-[#1f9a55]"><span className="absolute left-0 top-[3px] flex h-3 w-3 items-center justify-center bg-[#0f6b38] text-[8px] font-bold text-white">X</span></span> },
  { open: true, node: <span className="relative flex h-[18px] w-[18px] rounded-full bg-[#e8623a]"><span className="absolute left-0 top-[3px] flex h-3 w-3 items-center justify-center bg-[#c4421c] text-[8px] font-bold text-white">P</span></span> },
  { node: <svg width="16" height="18" viewBox="0 0 16 18"><rect width="16" height="18" fill="#f5f5f5" /><path d="M1 4h14v5H1z" fill="#6ac4c8" /><path d="M2 11h12v3H2z" fill="#a6d06a" /></svg> },
  { node: <Letter bg="#ee4b33" fg="#fff" ch="S" /> },
  { node: <Letter bg="#2f7cc4" fg="#fff" ch="S" /> },
  { node: <svg width="18" height="20" viewBox="0 0 18 20"><circle cx="9" cy="10" r="8.5" fill="#a6c63a" /><path d="M5 17V3l8 14V3" fill="none" stroke="#222" strokeWidth="2.4" /></svg> },
  { node: <svg width="18" height="14" viewBox="0 0 18 14"><path d="M0 3l7 4l10 -7l-7 14z" fill="#d8281e" /></svg> },
  { node: <svg width="16" height="18" viewBox="0 0 16 18"><path d="M0 0h16v13l-5 5H0z" fill="#f5c518" /><path d="M16 13h-5v5z" fill="#333" /></svg> },
  { node: <svg width="10" height="20" viewBox="0 0 10 20"><rect width="10" height="20" rx="1" fill="#6fb3e0" /><path d="M2 4h6M2 8h6M2 12h6" stroke="#fff" /></svg> },
  { node: <Letter bg="#e95234" fg="#fff" ch="C" /> },
  { node: <Letter bg="#6db33f" fg="#fff" ch="C" /> },
  { node: <Letter bg="#1f2d6e" fg="#fff" ch="“" /> },
  { open: true, node: <span className="relative flex h-[18px] w-[18px] items-center justify-center rounded-full bg-[#2ea6da]"><svg width="12" height="10" viewBox="0 0 12 10"><path d="M0 5l12 -5l-2 10l-4 -3l-2 2v-3z" fill="#fff" /></svg><span className="absolute -bottom-[2px] left-[6px] bg-[#888] px-px text-[6px] leading-[8px] text-white">34</span></span> },
  { node: <Letter bg="#1b6fe0" fg="#fff" ch="Z" round /> },
  { node: <svg width="18" height="18" viewBox="0 0 18 18"><circle cx="9" cy="9" r="9" fill="#1a1416" /><circle cx="9" cy="9" r="5" fill="#e0202a" /><circle cx="9" cy="9" r="2" fill="#1a1416" /></svg> },
  { open: true, node: <svg width="18" height="18" viewBox="0 0 18 18"><rect width="18" height="18" fill="#1d6fb8" /><path d="M0 18l6 -9l6 9zM7 18l5 -6l6 6z" fill="#0f3a66" /><circle cx="13" cy="5" r="2" fill="#bfe3f5" /></svg> },
]

function Taskbar() {
  return (
    <div className="flex h-[28px] items-stretch bg-[#3b3530] pl-0">
      <div className="flex -ml-px">
        {taskIcons.map((icon, i) => (
          <div
            key={i}
            className={`flex w-[34.08px] items-center justify-center border-b-2 ${icon.active ? 'bg-[#5d5853]' : ''} ${icon.open ? 'border-[#76b9ed]' : 'border-transparent'}`}
          >
            {icon.node}
          </div>
        ))}
      </div>
      <div className="ml-auto flex flex-col items-end justify-center pr-[2px] text-[8.5px] leading-[13px] text-[#f0f0f0]">
        <span>7:32 AM</span>
        <span>10/25/2023</span>
      </div>
    </div>
  )
}

export default function App() {
  return (
    <div className="relative h-[750px] w-[1332px] overflow-hidden bg-white font-['Liberation_Sans',sans-serif]">
      <TitleBar />
      <MenuBar />
      <ChartToolbar />
      <DrawToolbar />
      <PriceChart />
      <MacdPanel />
      <TimeAxis />
      <TabStrip />
      <StatusBar />
      <Taskbar />
      <svg width="16" height="22" viewBox="0 0 16 22" className="absolute left-[665px] top-[19px]">
        <path d="M1 1v16l4 -3.5l2.5 6l2.5 -1l-2.5 -5.5h5z" fill="#fff" stroke="#222" strokeWidth="1" />
      </svg>
    </div>
  )
}
